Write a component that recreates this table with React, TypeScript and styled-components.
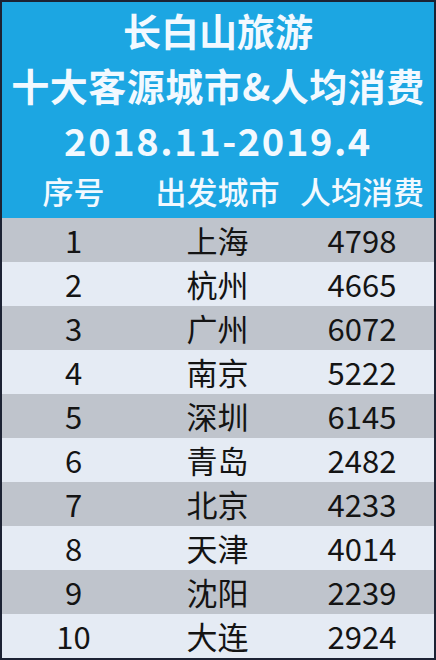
import React from "react";
import styled, { createGlobalStyle } from "styled-components";

const Global = createGlobalStyle`
  html, body { margin: 0; padding: 0; background: #1c2233; }
  * { box-sizing: border-box; }
`;

const Frame = styled.div`
  width: 436px;
  height: 660px;
  border: 2px solid #1c2233;
  display: flex;
  flex-direction: column;
  font-family: "Noto Sans CJK SC", "Noto Sans", sans-serif;
  overflow: hidden;
`;

const Header = styled.div`
  background: #1ca6e2;
  height: 216px;
  display: flex;
  flex-direction: column;
  align-items: center;
  color: #f2f9ff;
`;

const Titles = styled.div`
  display: flex;
  flex-direction: column;
  align-items: center;
`;

const TitleLine = styled.div<{ $spacing?: number }>`
  font-size: 38px;
  font-weight: 700;
  line-height: 55px;
  white-space: nowrap;
  letter-spacing: ${(p) => p.$spacing ?? 0}px;
`;

const ColGrid = styled.div`
  display: grid;
  grid-template-columns: 143px 145px 144px;
  width: 100%;
  align-items: center;
  justify-items: center;
`;

const HeadRow = styled(ColGrid)`
  font-size: 31px;
  font-weight: 500;
  height: 46px;
  line-height: 44px;
  margin-top: 1px;
`;

const Row = styled(ColGrid)<{ $odd: boolean }>`
  height: 44px;
  background: ${(p) => (p.$odd ? "#bfc4cc" : "#e5ebf4")};
  color: #141414;
  font-size: 31px;
  font-weight: 400;
  line-height: 42px;
`;

const rows: [string, string, string][] = [
  ["1", "上海", "4798"],
  ["2", "杭州", "4665"],
  ["3", "广州", "6072"],
  ["4", "南京", "5222"],
  ["5", "深圳", "6145"],
  ["6", "青岛", "2482"],
  ["7", "北京", "4233"],
  ["8", "天津", "4014"],
  ["9", "沈阳", "2239"],
  ["10", "大连", "2924"],
];

export default function App() {
  return (
    <>
      <Global />
      <Frame>
        <Header>
          <Titles>
            <TitleLine>长白山旅游</TitleLine>
            <TitleLine $spacing={0.5}>十大客源城市&amp;人均消费</TitleLine>
            <TitleLine $spacing={1.6}>2018.11-2019.4</TitleLine>
          </Titles>
          <HeadRow>
            <span>序号</span>
            <span>出发城市</span>
            <span>人均消费</span>
          </HeadRow>
        </Header>
        {rows.map((r, i) => (
          <Row key={r[0]} $odd={i % 2 === 0}>
            <span>{r[0]}</span>
            <span>{r[1]}</span>
            <span>{r[2]}</span>
          </Row>
        ))}
      </Frame>
    </>
  );
}
